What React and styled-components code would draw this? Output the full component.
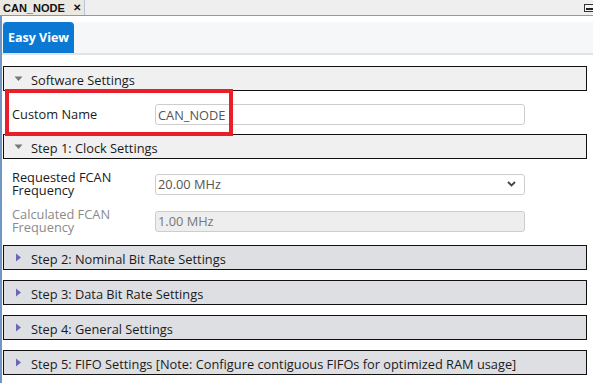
import styled, { createGlobalStyle } from 'styled-components';

const GlobalStyle = createGlobalStyle`
  * { box-sizing: border-box; }
  body {
    margin: 0;
    background: #fff;
    font-family: "Open Sans", "Noto Sans", sans-serif;
  }
`;

const Screen = styled.div`
  width: 593px;
  height: 383px;
  overflow: hidden;
  display: flex;
  flex-direction: column;
`;

const TabBar = styled.div`
  height: 16px;
  flex: none;
  display: flex;
  align-items: stretch;
  justify-content: space-between;
  background: #efefef;
  border-bottom: 1px solid #7c9dc2;
`;

const FileTab = styled.div`
  display: flex;
  align-items: center;
  gap: 8px;
  width: 85px;
  padding: 0 0 0 3px;
  background: #ebe9e2;
  border-right: 1px solid #b6c4d4;
  font-family: "Liberation Sans", Arial, sans-serif;
  font-weight: bold;
  font-size: 11px;
  color: #111;
`;

const Close = styled.span`
  font-size: 10px;
  font-weight: bold;
`;

const Minimize = styled.div`
  width: 9px;
  height: 8px;
  margin: 4px 0 0;
  border: 1px solid #333;
  border-right: none;
  background: #f4f4f4;
  position: relative;

  &::after {
    content: '';
    position: absolute;
    left: 1px;
    right: 0;
    bottom: 1px;
    height: 2px;
    background: #222;
  }
`;

const Panel = styled.div`
  flex: 1;
  display: flex;
  flex-direction: column;
  border-left: 2px solid #7196c4;
  padding-top: 6px;
`;

const ViewStrip = styled.div`
  height: 33px;
  flex: none;
  display: flex;
  align-items: stretch;
  padding-left: 1px;
  background: #f6f7f9;
  border-bottom: 2px solid #e2e3e5;
`;

const ViewTab = styled.div`
  width: 71px;
  display: flex;
  align-items: center;
  justify-content: center;
  background: #0b79d4;
  border-radius: 4px 4px 0 0;
  color: #fff;
  font-weight: 700;
  font-size: 12.5px;
`;

const Content = styled.div`
  display: flex;
  flex-direction: column;
  padding: 11px 6px 0 1px;
`;

const Header = styled.div`
  height: 25px;
  flex: none;
  display: flex;
  align-items: center;
  gap: 8px;
  padding: 2px 0 0 10px;
  border: 1px solid #111;
  background: ${p => (p.$open ? '#f0f0f0' : '#dedfe3')};
  color: #1b1b1b;
  font-size: 12.8px;
  white-space: nowrap;
  margin-top: ${p => (p.$gap ? '10px' : '0')};
`;

const Caret = styled.svg`
  width: 9px;
  height: 9px;
  flex: none;
  margin-top: -2px;
`;

const Body = styled.div`
  display: flex;
  flex-direction: column;
  padding: ${p => p.$pad};
  gap: ${p => p.$gap || 0}px;
`;

const Row = styled.div`
  display: grid;
  grid-template-columns: 143px 370px;
  align-items: center;
  padding-left: 9px;
  position: relative;
`;

const Label = styled.div`
  font-size: 12.8px;
  line-height: 13px;
  color: ${p => (p.$muted ? '#8a8a8a' : '#1b1b1b')};
`;

const Field = styled.div`
  height: 21px;
  display: flex;
  align-items: center;
  justify-content: space-between;
  padding: 0 8px 0 2px;
  border: 1px solid #cdcdcd;
  border-radius: 3px;
  background: ${p => (p.$disabled ? '#eeeeee' : '#fff')};
  color: ${p => (p.$disabled ? '#777' : '#555')};
  font-size: 12.8px;
`;

const Highlight = styled.div`
  position: absolute;
  left: 2px;
  top: -15px;
  width: 228px;
  height: 47px;
  border: 4px solid #e81f2b;
  pointer-events: none;
`;

const Down = () => (
  <Caret viewBox="0 0 9 9">
    <path d="M0.5 2.5 H8.5 L4.5 7 Z" fill="#777" />
  </Caret>
);

const Right = () => (
  <Caret viewBox="0 0 9 9">
    <path d="M2 0.5 V8.5 L7 4.5 Z" fill="#6a68b5" />
  </Caret>
);

const Chevron = () => (
  <svg width="9" height="6" viewBox="0 0 9 6">
    <path d="M1 1 L4.5 4.5 L8 1" fill="none" stroke="#444" strokeWidth="1.8" />
  </svg>
);

const collapsed = [
  'Step 2: Nominal Bit Rate Settings',
  'Step 3: Data Bit Rate Settings',
  'Step 4: General Settings',
  'Step 5: FIFO Settings [Note: Configure contiguous FIFOs for optimized RAM usage]',
];

export default function App() {
  return (
    <Screen>
      <GlobalStyle />
      <TabBar>
        <FileTab>
          CAN_NODE <Close>✕</Close>
        </FileTab>
        <Minimize />
      </TabBar>
      <Panel>
        <ViewStrip>
          <ViewTab>Easy View</ViewTab>
        </ViewStrip>
        <Content>
          <Header $open>
            <Down />
            Software Settings
          </Header>
          <Body $pad="13px 0 9px">
            <Row>
              <Highlight />
              <Label>Custom Name</Label>
              <Field>CAN_NODE</Field>
            </Row>
          </Body>
          <Header $open>
            <Down />
            Step 1: Clock Settings
          </Header>
          <Body $pad="12px 0 11px" $gap={11}>
            <Row>
              <Label>Requested FCAN<br />Frequency</Label>
              <Field>
                20.00 MHz
                <Chevron />
              </Field>
            </Row>
            <Row>
              <Label $muted>Calculated FCAN<br />Frequency</Label>
              <Field $disabled>1.00 MHz</Field>
            </Row>
          </Body>
          {collapsed.map((title, i) => (
            <Header key={title} $gap={i > 0}>
              <Right />
              {title}
            </Header>
          ))}
        </Content>
      </Panel>
    </Screen>
  );
}
